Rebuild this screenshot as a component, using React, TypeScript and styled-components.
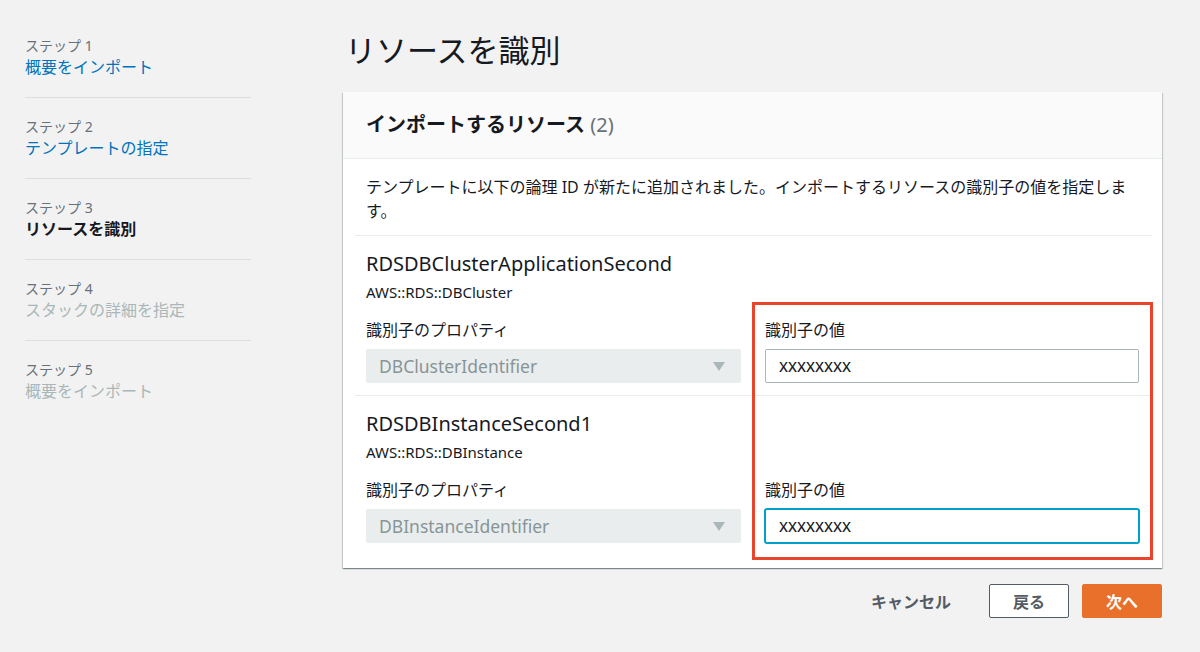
import React from 'react';
import styled, { createGlobalStyle } from 'styled-components';

const GlobalStyle = createGlobalStyle`
    html, body {
        margin: 0;
        padding: 0;
        background-color: #F2F2F2;
        font-family: "Noto Sans", "Noto Sans CJK JP", sans-serif;
        color: #16191F;
    }
    * {
        box-sizing: border-box;
    }
`;

const Page = styled.div`
    width: 1200px;
    height: 652px;
    display: flex;
    overflow: hidden;
`;

const Sidebar = styled.nav`
    width: 251px;
    padding: 36px 0 0 25px;
    flex-shrink: 0;
`;

const StepItem = styled.div<{ $first?: boolean; $last?: boolean }>`
    padding: ${p => (p.$first ? '0' : '19px')} 0 19px;
    border-bottom: ${p => (p.$last ? 'none' : '1px solid #DCDEDF')};
`;

const StepLabel = styled.div`
    font-size: 14px;
    line-height: 20px;
    color: #687078;
`;

const StepName = styled.div<{ $state: 'done' | 'current' | 'todo' }>`
    font-size: 16px;
    line-height: 22px;
    font-weight: ${p => (p.$state === 'current' ? 700 : 400)};
    color: ${p => (p.$state === 'done' ? '#0073BB' : p.$state === 'current' ? '#16191F' : '#AAB7B8')};
`;

const Main = styled.main`
    margin-left: 92px;
    width: 819px;
    padding-top: 30px;
`;

const Title = styled.h1`
    margin: 0 0 22px;
    font-size: 31px;
    line-height: 40px;
    font-weight: 400;
    color: #16191F;
    padding-left: 2px;
`;

const Panel = styled.section`
    position: relative;
    background-color: #FFF;
    box-shadow: 0 1px 1px 0 rgba(0, 28, 36, 0.3), 1px 1px 1px 0 rgba(0, 28, 36, 0.15), -1px 1px 1px 0 rgba(0, 28, 36, 0.15);
`;

const PanelHeader = styled.header`
    height: 67px;
    padding: 0 23px;
    display: flex;
    align-items: center;
    background-color: #FAFAFA;
    border-bottom: 1px solid #EAEDED;
`;

const PanelTitle = styled.h2`
    margin: 0;
    font-size: 20px;
    font-weight: 700;
    line-height: 26px;
`;

const Count = styled.span`
    font-weight: 400;
    color: #687078;
`;

const PanelBody = styled.div`
    padding: 0 10px 13px 12px;
`;

const Description = styled.p`
    margin: 0;
    padding: 16px 11px 12px;
    font-size: 16px;
    line-height: 24px;
    border-bottom: 1px solid #EAEDED;
`;

const Resource = styled.div<{ $last?: boolean }>`
    padding: 16px 11px 12px;
    border-bottom: ${p => (p.$last ? 'none' : '1px solid #EAEDED')};
`;

const ResourceName = styled.div`
    font-size: 20px;
    line-height: 24px;
`;

const ResourceType = styled.div`
    margin-top: 6px;
    font-size: 15px;
    line-height: 20px;
`;

const FieldRow = styled.div`
    margin-top: 17px;
    display: grid;
    grid-template-columns: 375px 374px;
    column-gap: 24px;
    align-items: end;
`;

const Field = styled.div`
    display: flex;
    flex-direction: column;
    gap: 8px;
`;

const FieldLabel = styled.label`
    font-size: 16px;
    line-height: 22px;
`;

const Select = styled.div`
    height: 34px;
    padding: 0 12px 0 13px;
    display: flex;
    align-items: center;
    justify-content: space-between;
    background-color: #EAEDED;
    border-radius: 2px;
    font-size: 17.5px;
    color: #879596;
`;

const Caret = styled.span`
    width: 0;
    height: 0;
    border-left: 6px solid transparent;
    border-right: 6px solid transparent;
    border-top: 9px solid #AAB7B8;
    margin-right: 4px;
`;

const Input = styled.input<{ $focused?: boolean }>`
    height: 34px;
    padding: 0 13px;
    font-family: "Liberation Sans", "Noto Sans CJK JP", sans-serif;
    font-size: 18px;
    color: #16191F;
    background-color: #FFF;
    border: 1px solid ${p => (p.$focused ? '#00A1C9' : '#AAB7B8')};
    border-radius: 2px;
    box-shadow: ${p => (p.$focused ? '0 0 0 1px #00A1C9' : 'none')};
    outline: none;
`;

const Highlight = styled.div`
    position: absolute;
    left: 409px;
    top: 210px;
    width: 401px;
    height: 258px;
    border: 3px solid #E8452C;
    pointer-events: none;
`;

const Actions = styled.div`
    margin-top: 16px;
    display: flex;
    justify-content: flex-end;
    align-items: center;
    gap: 13px;
`;

const Button = styled.button<{ $variant: 'link' | 'normal' | 'primary' }>`
    height: 34px;
    min-width: 80px;
    padding: 0 20px;
    font-family: inherit;
    font-size: 16px;
    font-weight: 700;
    border-radius: 2px;
    cursor: pointer;
    color: ${p => (p.$variant === 'primary' ? '#FFF' : '#545B64')};
    background-color: ${p => (p.$variant === 'primary' ? '#E8702A' : p.$variant === 'normal' ? '#FFF' : 'transparent')};
    border: 1px solid ${p => (p.$variant === 'primary' ? '#E8702A' : p.$variant === 'normal' ? '#545B64' : 'transparent')};
    margin-right: ${p => (p.$variant === 'link' ? '4px' : '0')};
`;

const steps = [
    { label: 'ステップ 1', name: '概要をインポート', state: 'done' as const },
    { label: 'ステップ 2', name: 'テンプレートの指定', state: 'done' as const },
    { label: 'ステップ 3', name: 'リソースを識別', state: 'current' as const },
    { label: 'ステップ 4', name: 'スタックの詳細を指定', state: 'todo' as const },
    { label: 'ステップ 5', name: '概要をインポート', state: 'todo' as const },
];

const resources = [
    { name: 'RDSDBClusterApplicationSecond', type: 'AWS::RDS::DBCluster', property: 'DBClusterIdentifier', value: 'xxxxxxxx' },
    { name: 'RDSDBInstanceSecond1', type: 'AWS::RDS::DBInstance', property: 'DBInstanceIdentifier', value: 'xxxxxxxx' },
];

const App = () => {
    return (
        <>
            <GlobalStyle />
            <Page>
                <Sidebar>
                    {steps.map((step, i) => (
                        <StepItem key={step.label} $first={i === 0} $last={i === steps.length - 1}>
                            <StepLabel>{step.label}</StepLabel>
                            <StepName $state={step.state}>{step.name}</StepName>
                        </StepItem>
                    ))}
                </Sidebar>
                <Main>
                    <Title>リソースを識別</Title>
                    <Panel>
                        <PanelHeader>
                            <PanelTitle>インポートするリソース <Count>(2)</Count></PanelTitle>
                        </PanelHeader>
                        <PanelBody>
                            <Description>
                                テンプレートに以下の論理 ID が新たに追加されました。インポートするリソースの識別子の値を指定します。
                            </Description>
                            {resources.map((res, i) => (
                                <Resource key={res.name} $last={i === resources.length - 1}>
                                    <ResourceName>{res.name}</ResourceName>
                                    <ResourceType>{res.type}</ResourceType>
                                    <FieldRow>
                                        <Field>
                                            <FieldLabel>識別子のプロパティ</FieldLabel>
                                            <Select>
                                                {res.property}
                                                <Caret />
                                            </Select>
                                        </Field>
                                        <Field>
                                            <FieldLabel>識別子の値</FieldLabel>
                                            <Input defaultValue={res.value} $focused={i === 1} />
                                        </Field>
                                    </FieldRow>
                                </Resource>
                            ))}
                        </PanelBody>
                        <Highlight />
                    </Panel>
                    <Actions>
                        <Button $variant="link">キャンセル</Button>
                        <Button $variant="normal">戻る</Button>
                        <Button $variant="primary">次へ</Button>
                    </Actions>
                </Main>
            </Page>
        </>
    );
};

export default App;
